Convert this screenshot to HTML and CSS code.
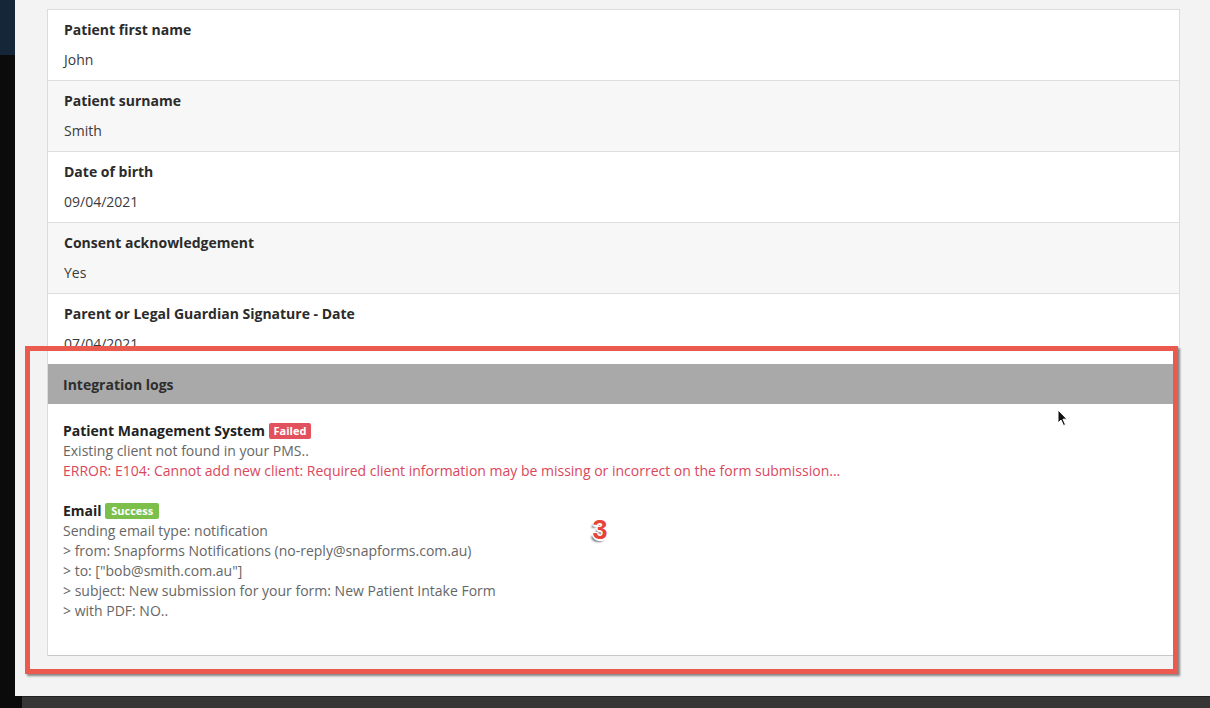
FILE: index.html
```
<!DOCTYPE html>
<html lang="en">
<head>
    <meta charset="UTF-8">
    <meta name="viewport" content="width=device-width, initial-scale=1.0">
    <title>Submission details</title>
    <link rel="stylesheet" href="styles.css">
</head>
<body>
    <div class="shell">
        <!-- left edge of the window behind -->
        <div class="rail"><div class="rail-top"></div></div>

        <div class="screen">
            <div class="content">
                <!-- submission answers -->
                <div class="panel">
                    <div class="row">
                        <div class="label">Patient first name</div>
                        <div class="value">John</div>
                    </div>
                    <div class="row alt">
                        <div class="label">Patient surname</div>
                        <div class="value">Smith</div>
                    </div>
                    <div class="row">
                        <div class="label">Date of birth</div>
                        <div class="value">09/04/2021</div>
                    </div>
                    <div class="row alt">
                        <div class="label">Consent acknowledgement</div>
                        <div class="value">Yes</div>
                    </div>
                    <div class="row cut">
                        <div class="label">Parent or Legal Guardian Signature - Date</div>
                        <div class="value">07/04/2021</div>
                    </div>
                </div>

                <!-- highlighted integration logs -->
                <div class="callout">
                    <div class="log-panel">
                        <div class="log-head">Integration logs</div>
                        <div class="log-body">
                            <div class="log-entry">
                                <div class="log-title">Patient Management System <span class="badge failed">Failed</span></div>
                                <div class="log-line">Existing client not found in your PMS..</div>
                                <div class="log-line error">ERROR: E104: Cannot add new client: Required client information may be missing or incorrect on the form submission...</div>
                            </div>
                            <div class="log-entry">
                                <div class="log-title">Email <span class="badge success">Success</span></div>
                                <div class="log-line">Sending email type: notification</div>
                                <div class="log-line">&gt; from: Snapforms Notifications (no-reply@snapforms.com.au)</div>
                                <div class="log-line">&gt; to: ["bob@smith.com.au"]</div>
                                <div class="log-line">&gt; subject: New submission for your form: New Patient Intake Form</div>
                                <div class="log-line">&gt; with PDF: NO..</div>
                            </div>
                        </div>
                    </div>
                    <span class="step">3</span>
                </div>

                <svg class="cursor" width="12" height="18" viewBox="0 0 12 18">
                    <path d="M1 1 L1 14 L4 11 L6.5 16.5 L8.5 15.6 L6 10.2 L10 10.2 Z" fill="#111" stroke="#fff" stroke-width="1"/>
                </svg>
            </div>
            <div class="bottom-bar"></div>
        </div>
    </div>
</body>
</html>
```

FILE: styles.css
```
body {
    margin: 0;
    padding: 0;
    background-color: #0b0b0b;
    font-family: "Open Sans", "Noto Sans", sans-serif;
    color: #333;
    overflow: hidden;
}

.shell {
    display: flex;
    height: 708px;
}

.rail {
    width: 15px;
    flex-shrink: 0;
    background-color: #0b0b0b;
}

.rail-top {
    height: 55px;
    background-color: #142638;
}

.screen {
    flex: 1;
    display: flex;
    flex-direction: column;
}

.content {
    position: relative;
    height: 687px;
    padding-top: 9px;
    background-color: #f3f3f3;
}

.bottom-bar {
    flex: 1;
    margin-left: 7px;
    background-color: #363636;
    border-top: 1px solid #222;
}

/* answers panel */
.panel {
    margin-left: 32px;
    width: 1131px;
    background: #fff;
    border: 1px solid #dcdcdc;
    border-bottom: none;
}

.row {
    padding: 10px 16px;
    border-bottom: 1px solid #dedede;
}

    .row.alt {
        background-color: #f7f7f7;
    }

    .row.cut {
        height: 42px;
        padding-bottom: 0;
        overflow: hidden;
        border-bottom: none;
    }

.label {
    font-size: 14px;
    font-weight: bold;
    line-height: 20px;
    color: #2b2b2b;
}

.value {
    font-size: 14px;
    line-height: 20px;
    margin-top: 10px;
    color: #3a3a3a;
}

/* red annotation box */
.callout {
    position: relative;
    margin-left: 10px;
    width: 1126px;
    border: 5px solid #ea5a4e;
    padding: 0 0 13px 17px;
    background-color: #f3f3f3;
    box-shadow: 2px 2px 2px rgba(0,0,0,0.45);
}

.log-panel {
    background: #fff;
    border-left: 1px solid #dcdcdc;
    border-bottom: 1px solid #c8c8c8;
    padding-top: 13px;
}

.log-head {
    height: 40px;
    line-height: 41px;
    padding-left: 15px;
    background-color: #a9a9a9;
    font-size: 14px;
    font-weight: bold;
    color: #2e2e2e;
}

.log-body {
    padding: 17px 15px 34px;
}

.log-entry + .log-entry {
    margin-top: 20px;
}

.log-title {
    font-size: 14px;
    font-weight: bold;
    line-height: 20px;
    color: #222;
}

.log-line {
    font-size: 14px;
    line-height: 20px;
    color: #666;
}

    .log-line.error {
        color: #d9475c;
    }

.badge {
    display: inline-block;
    vertical-align: 1px;
    padding: 0 5px;
    height: 16px;
    line-height: 16px;
    border-radius: 2px;
    font-size: 11px;
    font-weight: bold;
    color: #fff;
}

    .badge.failed {
        background-color: #e2515e;
    }

    .badge.success {
        padding: 0 6px;
        background-color: #7cbf4b;
    }

.step {
    position: absolute;
    left: 558px;
    top: 164px;
    width: 24px;
    line-height: 30px;
    text-align: center;
    font-family: "Liberation Sans", Arial, sans-serif;
    font-size: 27px;
    font-weight: bold;
    color: #e5443a;
    text-shadow: -1px -1px 0 #fff, 1px -1px 0 #fff, -1px 1px 0 #fff, 1px 1px 0 #fff, 0 2px 0 #fff, -2px 3px 2px rgba(0,0,0,0.5);
}

.cursor {
    position: absolute;
    left: 1042px;
    top: 409px;
}
```
